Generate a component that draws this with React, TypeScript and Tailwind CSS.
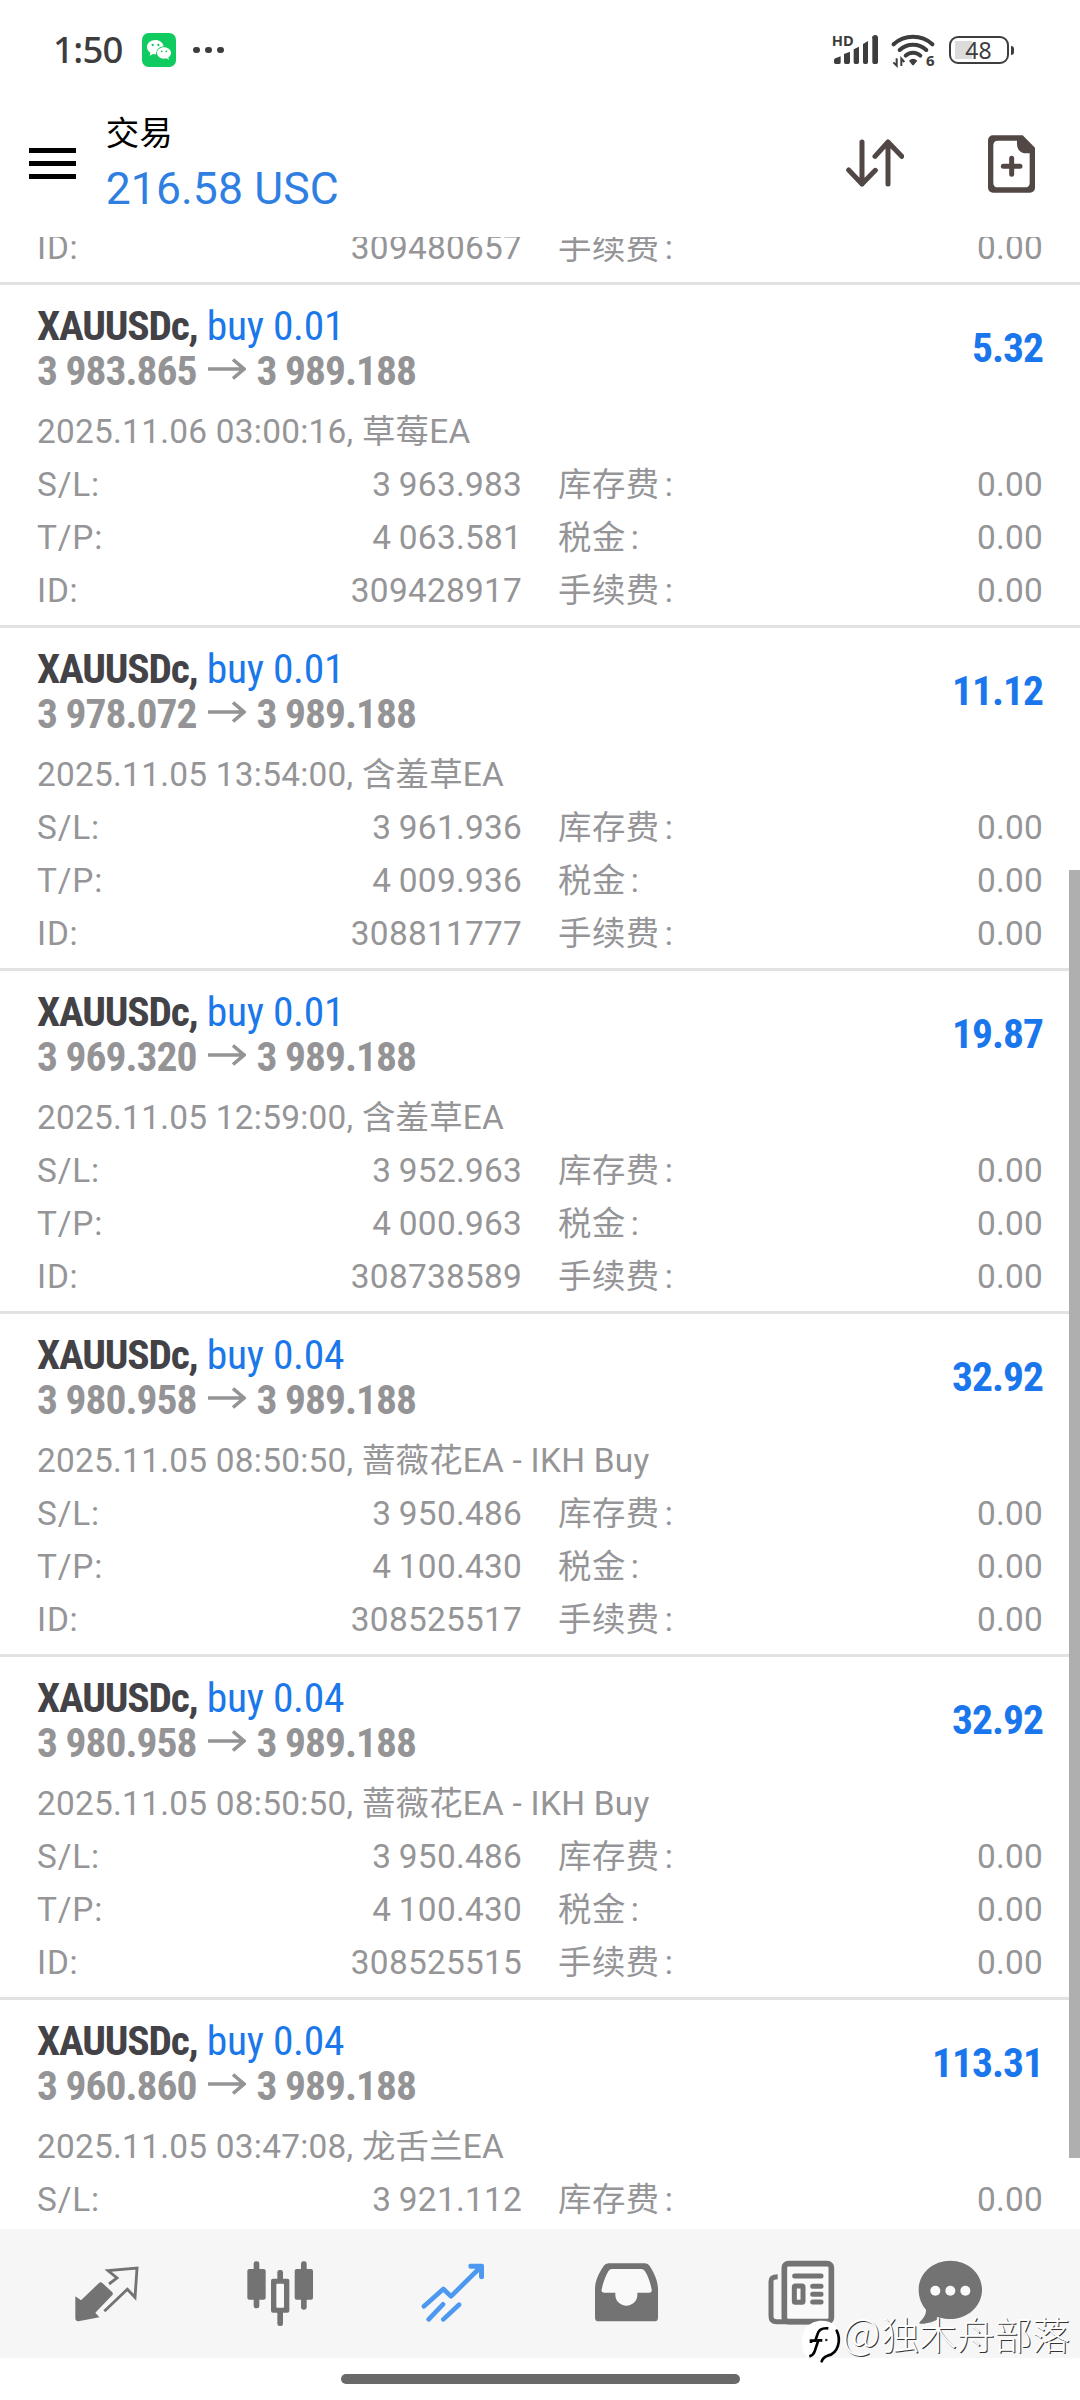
import type { ReactNode } from "react";

type Position = {
  lots: string;
  open: string;
  profit: string;
  note: string;
  sl: string;
  tp: string;
  id: string;
};

const positions: Position[] = [
  { lots: "0.01", open: "3 983.865", profit: "5.32", note: "2025.11.06 03:00:16, 草莓EA", sl: "3 963.983", tp: "4 063.581", id: "309428917" },
  { lots: "0.01", open: "3 978.072", profit: "11.12", note: "2025.11.05 13:54:00, 含羞草EA", sl: "3 961.936", tp: "4 009.936", id: "308811777" },
  { lots: "0.01", open: "3 969.320", profit: "19.87", note: "2025.11.05 12:59:00, 含羞草EA", sl: "3 952.963", tp: "4 000.963", id: "308738589" },
  { lots: "0.04", open: "3 980.958", profit: "32.92", note: "2025.11.05 08:50:50, 蔷薇花EA - IKH Buy", sl: "3 950.486", tp: "4 100.430", id: "308525517" },
  { lots: "0.04", open: "3 980.958", profit: "32.92", note: "2025.11.05 08:50:50, 蔷薇花EA - IKH Buy", sl: "3 950.486", tp: "4 100.430", id: "308525515" },
];

const lastPosition = { lots: "0.04", open: "3 960.860", profit: "113.31", note: "2025.11.05 03:47:08, 龙舌兰EA", sl: "3 921.112" };

function DetailRow({ label, value, feeLabel }: { label: string; value: string; feeLabel: string }) {
  return (
    <div className="grid h-[53px] shrink-0 grid-cols-2 gap-9 px-[37px] leading-[53px]">
      <div className="flex justify-between">
        <span className="tracking-[0.8px]">{label}</span>
        <span className="[word-spacing:-1px]">{value}</span>
      </div>
      <div className="flex justify-between">
        <span className="tracking-[0.5px]">
          {feeLabel}
          <span className="ml-[5px]">:</span>
        </span>
        <span>0.00</span>
      </div>
    </div>
  );
}

function PositionSummary({ lots, open, profit, note }: Pick<Position, "lots" | "open" | "profit" | "note">) {
  return (
    <>
      <div className="flex h-[90px] justify-between px-[37px] font-['Roboto_Condensed','Roboto',sans-serif] text-[41.5px] leading-[45px] tracking-[-1px]">
        <div>
          <div className="tracking-[-0.3px] text-[#1a78ea]">
            <span className="font-bold tracking-[-1.2px] text-[#434247]">XAUUSDc,</span> buy {lots}
          </div>
          <div className="flex font-bold text-[#949496]">
            <span>{open}</span>
            <svg className="ml-3 mr-[10px] mt-[10px] h-[22px] w-[38px]" viewBox="0 0 38 22" fill="none" stroke="currentColor" strokeWidth="3.6">
              <path d="M0 11H36M25 1.5L36 11L25 20.5" />
            </svg>
            <span>3 989.188</span>
          </div>
        </div>
        <div className="mt-[22px] font-bold text-[#1976ec]">{profit}</div>
      </div>
      <div className="mt-3 h-[53px] px-[37px] leading-[53px]">{note}</div>
    </>
  );
}

function PositionCard({ p }: { p: Position }) {
  return (
    <section className="h-[343px] shrink-0 border-b-[3px] border-[#e2e2e2] pt-[18px]">
      <PositionSummary lots={p.lots} open={p.open} profit={p.profit} note={p.note} />
      <DetailRow label="S/L:" value={p.sl} feeLabel="库存费" />
      <DetailRow label="T/P:" value={p.tp} feeLabel="税金" />
      <DetailRow label="ID:" value={p.id} feeLabel="手续费" />
    </section>
  );
}

function StatusBar() {
  return (
    <div className="flex h-[99px] items-start justify-between pl-[53px] pr-[66px] pt-[30px] text-[#3d3d3d]">
      <div className="flex h-10 items-center">
        <span className="-mt-[2px] w-[89px] font-['Noto_Sans',sans-serif] text-[36.5px] font-medium leading-10 tracking-[-0.7px]">1:50</span>
        <svg className="h-[34px] w-[34px]" viewBox="0 0 102 102">
          <rect width="102" height="102" rx="20" fill="#10cc60" />
          <path d="M40 21c-14 0-25 9-25 21 0 7 4 13 10 17l-2 9 10-5c3 1 6 1 9 1 1-15 11-23 23-24C63 29 53 21 40 21z" fill="#fff" />
          <path d="M66 43c-12 0-21 8-21 17s9 17 21 17c3 0 5 0 7-1l8 4-2-7c5-3 8-8 8-13 0-9-9-17-21-17z" fill="#fff" />
          <g fill="#10cc60">
            <circle cx="32" cy="36" r="3.4" />
            <circle cx="49" cy="36" r="3.4" />
            <circle cx="59" cy="55" r="2.8" />
            <circle cx="73" cy="55" r="2.8" />
          </g>
        </svg>
        <div className="ml-[17px] flex gap-[5.4px]">
          <span className="h-[6.6px] w-[6.6px] rounded-full bg-current" />
          <span className="h-[6.6px] w-[6.6px] rounded-full bg-current" />
          <span className="h-[6.6px] w-[6.6px] rounded-full bg-current" />
        </div>
      </div>
      <div className="flex h-10 items-center">
        <svg className="h-10 w-12" viewBox="156 90 144 120" fill="currentColor">
          <text x="158" y="137" fontFamily="Noto Sans, sans-serif" fontWeight="700" fontSize="44" textLength="66">HD</text>
          <path d="M165 181a6 6 0 0 1 4-6l16-6v17a5 5 0 0 1-5 6h-10a5 5 0 0 1-5-5z" />
          <path d="M195 162l18-7v32a5 5 0 0 1-5 5h-8a5 5 0 0 1-5-5zM224 148l16-8v47a5 5 0 0 1-5 5h-6a5 5 0 0 1-5-5zM252 132l15-9v64a5 5 0 0 1-5 5h-5a5 5 0 0 1-5-5zM280 117a9 9 0 0 1 17-6v76a5 5 0 0 1-5 5h-7a5 5 0 0 1-5-5z" />
        </svg>
        <svg className="ml-3 h-10 w-[44px]" viewBox="332 90 132 120" fill="none" stroke="currentColor">
          <path d="M340 133C372 103 424 103 456 133" strokeWidth="12" strokeLinecap="round" />
          <path d="M358 150C380 129 416 129 438 150" strokeWidth="12" strokeLinecap="round" />
          <path d="M376 167C388 155 408 155 420 167" strokeWidth="12" strokeLinecap="round" />
          <path d="M386 182Q398 171 411 182L401 194Q398 197 395 194Z" fill="currentColor" stroke="none" />
          <path d="M349 175V197L339 187M363 198V176L372 186" strokeWidth="6" />
          <text x="437" y="198" fill="currentColor" stroke="none" fontFamily="Noto Sans, sans-serif" fontWeight="700" fontSize="45">6</text>
        </svg>
        <div className="ml-[14px] flex h-7 w-[60px] items-center justify-center rounded-[9px] border-[2.5px] border-current bg-[linear-gradient(#dcdcdc,#dcdcdc)] bg-[length:17px_18px] bg-[position:4px_center] bg-no-repeat font-['Noto_Sans',sans-serif] text-[23px] leading-none">
          48
        </div>
        <span className="ml-[2px] h-[9px] w-[3.5px] rounded-r-sm bg-current" />
      </div>
    </div>
  );
}

function Header() {
  return (
    <header className="flex h-[138px] items-start pl-[29px] pr-[45px]">
      <div className="mt-[49px] flex w-[47px] flex-col gap-2">
        <span className="h-[5px] bg-black" />
        <span className="h-[5px] bg-black" />
        <span className="h-[5px] bg-black" />
      </div>
      <div className="ml-[29.7px] mt-[8px] flex-1">
        <div className="h-[54px] text-[33.5px] leading-[53px] text-black">交易</div>
        <div className="h-[56px] text-[44.5px] leading-[56px] tracking-[0.1px] text-[#2f7fe2]">216.58 USC</div>
      </div>
      <svg className="mt-[40px] h-[48px] w-[58px] text-[#514846]" viewBox="199 418 174 144" fill="none" stroke="currentColor" strokeWidth="15" strokeLinecap="round" strokeLinejoin="round">
        <path d="M247 427V553M207 511L247 553L287 512M325 553V427M286 470L325 427L366 470" />
      </svg>
      <svg className="ml-[84px] mt-[36px] h-[58px] w-[47px] text-[#514846]" viewBox="624 405 141 172" fill="currentColor">
        <path fillRule="evenodd" d="M639 405H728L765 442V562a15 15 0 0 1-15 15H639a15 15 0 0 1-15-15V420a15 15 0 0 1 15-15ZM654 421Q640 421 640 435V547Q640 561 654 561H735Q749 561 749 547V459H740C722 459 711 448 711 430V421Z" />
        <path d="M695 474V522M670 498H720" stroke="currentColor" strokeWidth="15" strokeLinecap="round" />
      </svg>
    </header>
  );
}

function NavIcon({ viewBox, className, children }: { viewBox: string; className: string; children: ReactNode }) {
  return (
    <div className="flex flex-1 items-center justify-center">
      <svg className={className} viewBox={viewBox} fill="currentColor" overflow="visible">
        {children}
      </svg>
    </div>
  );
}

const iconSize = "h-[68.7px] w-[66.7px] text-[#737373]";

function BottomNav() {
  return (
    <nav className="flex h-[129px] bg-[#f6f6f6] px-5">
      <NavIcon viewBox="221 115 200 206" className={iconSize}>
        <path d="M228 227L245 239L299 187Q304 182 309 187L339 215Q342 219 339 223L288 276L300 290L237 302Q228 302 228 293Z" />
        <path d="M329 190L353 172L326 150L413 142L407 230L384 206L315 272" fill="none" stroke="currentColor" strokeWidth="8.5" />
      </NavIcon>
      <NavIcon viewBox="741 115 200 206" className={iconSize}>
        <rect x="742" y="145" width="55" height="92" rx="6" />
        <rect x="761" y="122" width="17" height="141" rx="7" />
        <rect x="884" y="145" width="55" height="92" rx="6" />
        <rect x="903" y="122" width="17" height="145" rx="7" />
        <rect x="832" y="148" width="17" height="168" rx="7" />
        <rect x="813" y="174" width="55" height="102" rx="6" />
        <rect x="829" y="189" width="23" height="72" rx="3" fill="#f9f9f9" />
      </NavIcon>
      <NavIcon viewBox="181 115 200 206" className="h-[68.7px] w-[66.7px] text-[#4e99f0]">
        <path d="M193 257L251 205L274 227L360 142M207 296L250 251M251 296L298 252" fill="none" stroke="currentColor" strokeWidth="14" strokeLinecap="round" strokeLinejoin="round" />
        <path d="M333 129H367Q373 129 373 135V170Q373 176 366 176T358 170V155L346 144H333Q326 144 326 136T333 129Z" />
      </NavIcon>
      <NavIcon viewBox="701 115 200 206" className={iconSize}>
        <path d="M748 128H857Q866 128 871 136C886 160 896 182 896 206V291Q896 302 885 302H718Q707 302 707 291V206C707 182 717 160 733 136Q738 128 748 128Z" />
        <path d="M758 145H845Q853 145 857 152C867 168 873 186 877 206Q879 216 869 216H834V223A33 32 0 0 1 768 223V216H735Q725 216 727 206C731 186 738 168 747 152Q751 145 758 145Z" fill="#f9f9f9" />
      </NavIcon>
      <NavIcon viewBox="142 115 200 206" className={iconSize}>
        <path d="M174 168Q154 168 154 182V286Q154 303 171 303H325" fill="none" stroke="currentColor" strokeWidth="15" />
        <rect x="194" y="129" width="141" height="174" rx="12" fill="#f9f9f9" stroke="currentColor" strokeWidth="17" />
        <path d="M225 166H304M279 197H304M279 221H304M279 244H304" stroke="currentColor" strokeWidth="15" strokeLinecap="round" />
        <rect x="224" y="196" width="26" height="49" rx="3" fill="#f9f9f9" stroke="currentColor" strokeWidth="15" />
      </NavIcon>
      <NavIcon viewBox="590 115 200 206" className="mr-12 h-[68.7px] w-[66.7px] text-[#737373]">
        <path d="M693 120C745 120 788 158 788 207S745 295 693 295C682 295 672 293 663 291C646 303 622 310 603 309Q597 308 602 303C614 292 621 281 620 267C607 252 598 231 598 207C598 158 641 120 693 120Z" />
        <g fill="#fafafa">
          <circle cx="648" cy="210" r="15" />
          <circle cx="693" cy="210" r="15" />
          <circle cx="738" cy="210" r="15" />
        </g>
      </NavIcon>
    </nav>
  );
}

function Watermark() {
  return (
    <div className="absolute left-[801px] top-[2313px] flex h-[50px] items-start">
      <svg className="mt-[5px] h-[46px] w-[42px]" viewBox="0 0 126 138">
        <path d="M62 8C96 8 117 30 117 60C117 88 100 108 76 114Q62 119 59 135Q55 125 58 117C38 116 24 110 20 118Q4 108 3 70C2 34 26 8 62 8Z" fill="#fff" />
        <path d="M107 38C121 66 112 106 80 113Q66 118 62 130" fill="none" stroke="#000" strokeWidth="8" strokeLinecap="round" />
        <path d="M82 31C60 29 52 37 49 50L43 68H30V75M64 67H52L41 100Q37 112 25 115" fill="none" stroke="#000" strokeWidth="8" />
        <circle cx="76" cy="66" r="4" fill="#333" />
      </svg>
      <div className="-mt-[5px] flex items-baseline font-['Noto_Sans_CJK_SC',sans-serif] text-[37.7px] font-light leading-[50px] text-white [text-shadow:1px_1px_0_#333]">
        <span className="-ml-px w-[39.5px] text-[42px] leading-none">@</span>
        <span>独木舟部落</span>
      </div>
    </div>
  );
}

export default function App() {
  return (
    <div className="relative flex h-[2400px] w-[1080px] flex-col overflow-hidden bg-white font-['Roboto','Noto_Sans_CJK_SC',sans-serif]">
      <StatusBar />
      <Header />
      <main className="relative flex h-[1992px] flex-col overflow-hidden text-[33.4px] tracking-[0.25px] text-[#959597]">
        <div className="flex h-[48px] shrink-0 flex-col justify-end overflow-hidden border-b-[3px] border-[#e2e2e2] pb-2">
          <DetailRow label="ID:" value="309480657" feeLabel="手续费" />
        </div>
        {positions.map((p) => (
          <PositionCard key={p.id} p={p} />
        ))}
        <section className="pt-[18px]">
          <PositionSummary lots={lastPosition.lots} open={lastPosition.open} profit={lastPosition.profit} note={lastPosition.note} />
          <DetailRow label="S/L:" value={lastPosition.sl} feeLabel="库存费" />
        </section>
        <div className="absolute right-0 top-[633px] h-[1288px] w-[11px] bg-[#afafaf]" />
      </main>
      <BottomNav />
      <div className="flex flex-1 items-start justify-center pt-4">
        <span className="h-[10px] w-[399px] rounded-full bg-[#696969]" />
      </div>
      <Watermark />
    </div>
  );
}
